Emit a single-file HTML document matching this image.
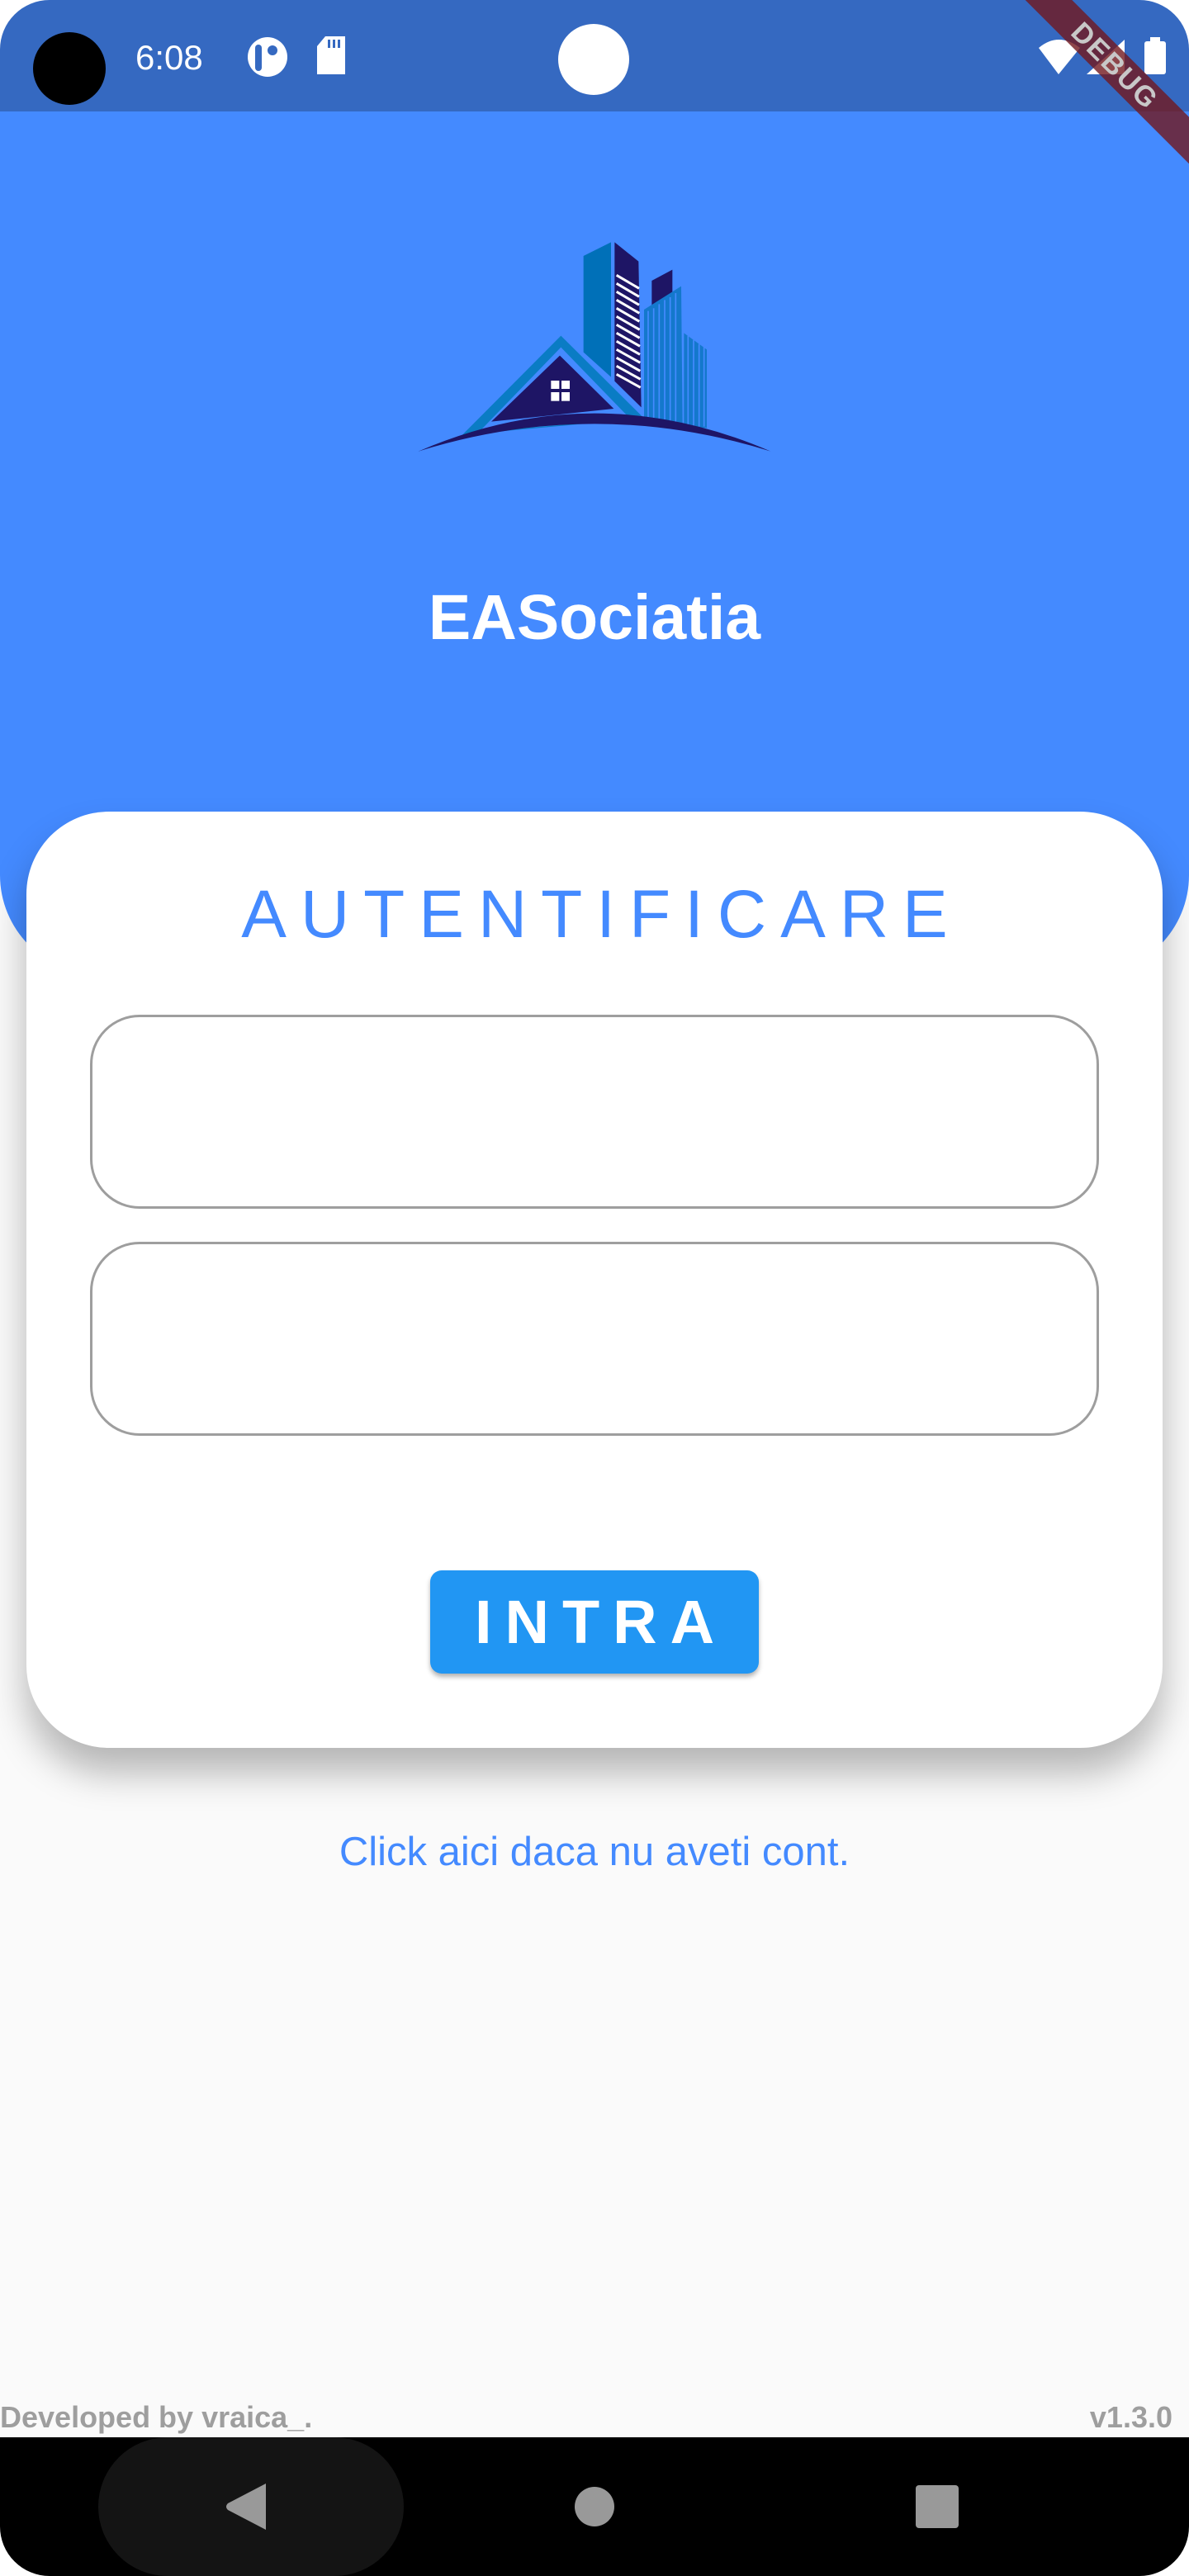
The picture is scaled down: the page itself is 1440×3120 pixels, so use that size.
<!DOCTYPE html>
<html><head><meta charset="utf-8">
<style>
*{margin:0;padding:0;box-sizing:border-box}
html,body{width:1440px;height:3120px;background:#fff;overflow:hidden;font-family:"Liberation Sans",sans-serif}
#screen{position:absolute;left:0;top:0;width:1440px;height:3120px;background:#fafafa;border-radius:60px;overflow:hidden}
#status{position:absolute;left:0;top:0;width:1440px;height:135px;background:#3569c1}
#header{position:absolute;left:0;top:135px;width:1440px;height:1045px;background:#448aff;border-radius:0 0 120px 120px}
#card{position:absolute;left:32px;top:983px;width:1376px;height:1134px;background:#fff;border-radius:100px;box-shadow:0 30px 45px rgba(0,0,0,0.28)}
.inp{position:absolute;left:77px;width:1222px;height:235px;border:3px solid #9e9e9e;border-radius:60px}
#title{position:absolute;left:0;top:1060px;width:1440px;text-align:center;color:#448aff;font-size:82px;letter-spacing:17px;padding-left:17px;line-height:96px}
#btn{position:absolute;left:521px;top:1902px;width:398px;height:125px;background:#2196f3;border-radius:14px;box-shadow:0 4px 6px rgba(0,0,0,0.3);color:#fff;font-weight:bold;font-size:74px;line-height:125px;text-align:center;letter-spacing:16px;padding-left:16px}
#click{position:absolute;left:0;top:2214px;width:1440px;text-align:center;color:#448aff;font-size:49px;line-height:58px}
.foot{position:absolute;top:2904px;color:#9e9e9e;font-weight:bold;font-size:36px;line-height:48px}
#nav{position:absolute;left:0;top:2952px;width:1440px;height:168px;background:#000}
</style></head><body>
<div id="screen">
<div id="header"></div>
<div id="status">
  <div style="position:absolute;left:40px;top:39px;width:88px;height:88px;border-radius:50%;background:#000"></div>
  <div style="position:absolute;left:164px;top:46px;color:#fff;font-size:42px;line-height:48px">6:08</div>
  <svg style="position:absolute;left:298px;top:44px" width="52" height="50" viewBox="0 0 52 50"><circle cx="26" cy="25" r="24" fill="#fff"/><rect x="11" y="10" width="8" height="32" rx="4" fill="#3569c1"/><circle cx="32" cy="17" r="6" fill="#3569c1"/></svg>
  <svg style="position:absolute;left:382px;top:44px" width="38" height="48" viewBox="0 0 38 48"><path d="M12 0H36V46H2V12Z" fill="#fff"/><rect x="15" y="4" width="3" height="10" fill="#3569c1"/><rect x="21" y="4" width="3" height="10" fill="#3569c1"/><rect x="27" y="4" width="3" height="10" fill="#3569c1"/></svg>
  <div style="position:absolute;left:676px;top:29px;width:86px;height:86px;border-radius:50%;background:#fff"></div>
  <svg style="position:absolute;left:1256px;top:44px" width="160" height="50" viewBox="0 0 160 50"><path d="M2 14Q26 -6 52 14L26 46Z" fill="#fff"/><path d="M60 46L106 4V46Z" fill="#fff"/><rect x="130" y="6" width="26" height="40" rx="3" fill="#fff"/><rect x="137" y="1" width="12" height="6" fill="#fff"/></svg>
</div>
<svg style="position:absolute;left:480px;top:260px" width="480" height="300" viewBox="0 0 1440 900">
  <polygon points="680,150 780,100 780,590 680,500" fill="#0070b8"/>
  <polygon points="793,100 880,170 890,700 793,605" fill="#1e1565"/>
  <g stroke="#fff" stroke-width="9">
    <line x1="800" y1="220" x2="882" y2="268"/><line x1="800" y1="250" x2="882" y2="298"/><line x1="800" y1="280" x2="882" y2="328"/><line x1="800" y1="310" x2="883" y2="358"/><line x1="800" y1="340" x2="883" y2="388"/><line x1="800" y1="370" x2="884" y2="418"/><line x1="800" y1="400" x2="884" y2="448"/><line x1="800" y1="430" x2="885" y2="478"/><line x1="800" y1="460" x2="885" y2="508"/><line x1="800" y1="490" x2="886" y2="538"/><line x1="800" y1="520" x2="886" y2="568"/><line x1="800" y1="550" x2="887" y2="598"/><line x1="800" y1="580" x2="887" y2="628"/>
  </g>
  <polygon points="928,240 1003,200 1003,300 928,330" fill="#1e1565"/>
  <polygon points="900,345 1035,260 1040,770 900,760" fill="#1478cc"/>
  <polygon points="1045,430 1128,490 1128,775 1045,770" fill="#1478cc"/>
  <g stroke="#448aff" stroke-width="5">
    <line x1="915" y1="350" x2="915" y2="760"/><line x1="935" y1="340" x2="935" y2="760"/><line x1="955" y1="325" x2="955" y2="760"/><line x1="975" y1="310" x2="975" y2="760"/><line x1="995" y1="300" x2="995" y2="760"/><line x1="1015" y1="285" x2="1015" y2="760"/><line x1="1060" y1="440" x2="1060" y2="770"/><line x1="1080" y1="455" x2="1080" y2="770"/><line x1="1100" y1="470" x2="1100" y2="770"/><line x1="1118" y1="480" x2="1118" y2="770"/>
  </g>
  <polygon points="598,440 240,800 900,740" fill="#0a7cc4"/>
  <polygon points="598,482 300,790 850,742" fill="#448aff"/>
  <polygon points="594,512 345,752 790,705" fill="#1e1565"/>
  <rect x="562" y="603" width="30" height="30" fill="#fff"/><rect x="600" y="603" width="30" height="30" fill="#fff"/><rect x="562" y="645" width="30" height="32" fill="#fff"/><rect x="600" y="645" width="30" height="32" fill="#fff"/>
  <path d="M80 860Q720 584 1360 860Q720 660 80 860Z" fill="#1e1565"/>
</svg>
<div style="position:absolute;left:0;top:700px;width:1440px;text-align:center;color:#fff;font-weight:bold;font-size:77px;line-height:96px">EASociatia</div>
<div id="card"></div>
<div id="title">AUTENTIFICARE</div>
<div class="inp" style="top:1229px;left:109px"></div>
<div class="inp" style="top:1504px;left:109px"></div>
<div id="btn">INTRA</div>
<div id="click">Click aici daca nu aveti cont.</div>
<div class="foot" style="left:0">Developed by vraica_.</div>
<div class="foot" style="right:20px">v1.3.0</div>
<div id="nav">
  <div style="position:absolute;left:119px;top:0;width:370px;height:168px;border-radius:85px;background:#141414"></div>
  <svg style="position:absolute;left:270px;top:56px" width="60" height="58" viewBox="0 0 60 58"><path d="M52 0V56L6 32Q2 28 6 24Z" fill="#999"/></svg>
  <div style="position:absolute;left:696px;top:60px;width:48px;height:48px;border-radius:50%;background:#999"></div>
  <div style="position:absolute;left:1109px;top:58px;width:52px;height:52px;border-radius:4px;background:#999"></div>
</div>
<div style="position:absolute;left:1150px;top:60px;width:400px;height:40px;transform:rotate(45deg);background:rgba(114,24,30,0.8);color:#c8c8c8;font-weight:bold;font-size:34px;line-height:40px;text-align:center;letter-spacing:2px">DEBUG</div>
</div>
</body></html>
